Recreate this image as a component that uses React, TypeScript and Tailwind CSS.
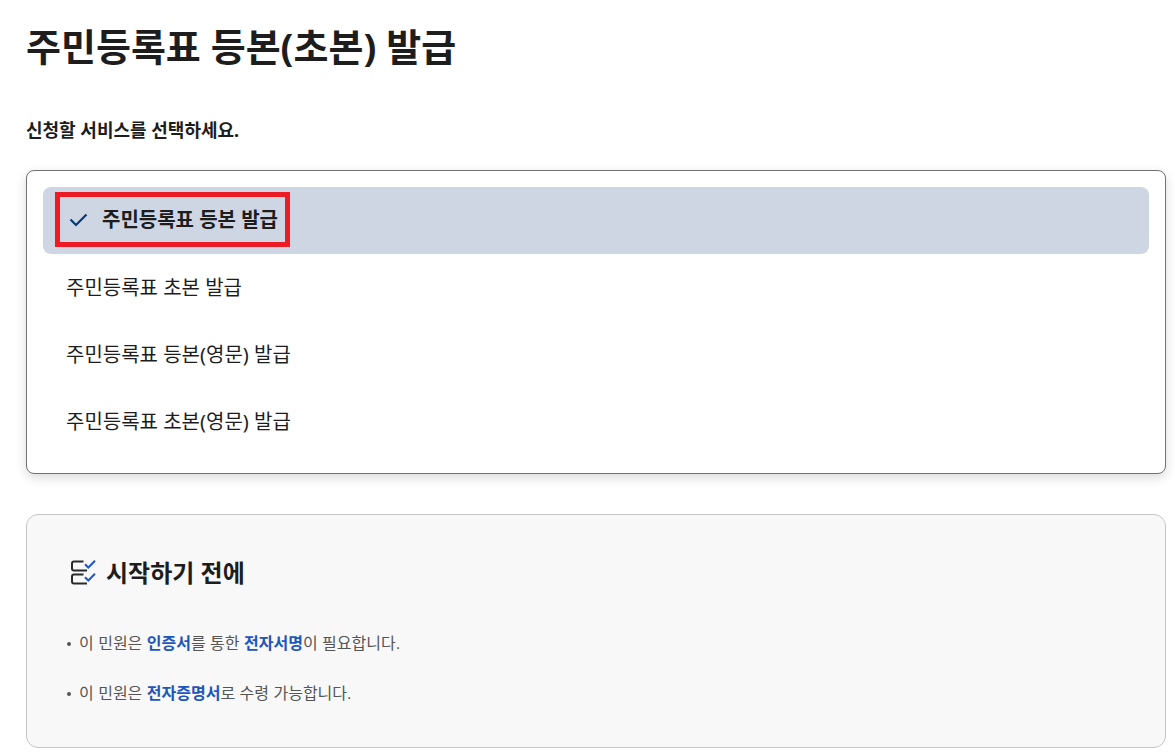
const services = [
  "주민등록표 등본 발급",
  "주민등록표 초본 발급",
  "주민등록표 등본(영문) 발급",
  "주민등록표 초본(영문) 발급",
];

export default function App() {
  return (
    <main className="bg-white pt-[19px] pr-[9px] pb-2 pl-[26px] font-['Noto_Sans','Noto_Sans_CJK_KR',sans-serif] text-[#1d1d1d]">
      <h1 className="text-[38px] leading-[54px] font-bold">주민등록표 등본(초본) 발급</h1>
      <h2 id="service-label" className="mt-[43px] text-[18px] leading-7 font-bold">신청할 서비스를 선택하세요.</h2>
      <ul
        aria-labelledby="service-label"
        className="mt-[26px] rounded-lg border border-[#717171] bg-white px-4 pt-4 pb-[18px] shadow-[0_4px_12px_rgba(0,0,0,0.14)]"
      >
        {services.map((name, i) => (
          <li key={name}>
            {i === 0 ? (
              <button type="button" aria-pressed="true" className="flex h-[67px] w-full items-start rounded-lg bg-[#cdd6e2] px-3 pt-[5px] text-left text-[20px] font-bold">
                <span className="flex h-[55px] items-center gap-[14px] border-5 border-[#ed1c24] pr-[7px] pl-2">
                  <svg width="20" height="20" viewBox="0 0 20 20" fill="none" stroke="#083878" strokeWidth="2.2" aria-hidden="true">
                    <path d="M2.500 9.500L8 15L18.500 4.500" />
                  </svg>
                  {name}
                </span>
              </button>
            ) : (
              <button type="button" className="flex h-[67px] w-full items-center rounded-lg px-[23px] text-left text-[20px]">{name}</button>
            )}
          </li>
        ))}
      </ul>
      <section className="mt-10 rounded-xl border border-[#c6c6c6] bg-[#f8f8f8] px-10 pt-10 pb-[39px]">
        <h2 className="flex items-center gap-2 pl-[3px] text-[24px] leading-9 font-bold">
          <svg width="28" height="28" viewBox="0 0 28 28" fill="none" strokeWidth="2" aria-hidden="true">
            <path stroke="#2a2a2a" d="M13.500 2.500H4Q2 2.500 2 4.500V9.500Q2 11.500 4 11.500H17M13.500 15.500H4Q2 15.500 2 17.500V22.500Q2 24.500 4 24.500H17" />
            <path stroke="#1f57c8" d="M15 5.200L18.300 8.500L25 1.800M15 18.200L18.300 21.500L25 14.800" />
          </svg>
          시작하기 전에
        </h2>
        <ul className="mt-[39px] space-y-[22px] font-['Liberation_Sans','Noto_Sans_CJK_KR',sans-serif] text-[16px] leading-7 text-[#555]">
          <li className="flex items-center gap-2">
            <span className="size-1 rounded-full bg-[#555]" />
            <p>이 민원은 <strong className="text-[#1d56bc]">인증서</strong>를 통한 <strong className="text-[#1d56bc]">전자서명</strong>이 필요합니다.</p>
          </li>
          <li className="flex items-center gap-2">
            <span className="size-1 rounded-full bg-[#555]" />
            <p>이 민원은 <strong className="text-[#1d56bc]">전자증명서</strong>로 수령 가능합니다.</p>
          </li>
        </ul>
      </section>
    </main>
  );
}
